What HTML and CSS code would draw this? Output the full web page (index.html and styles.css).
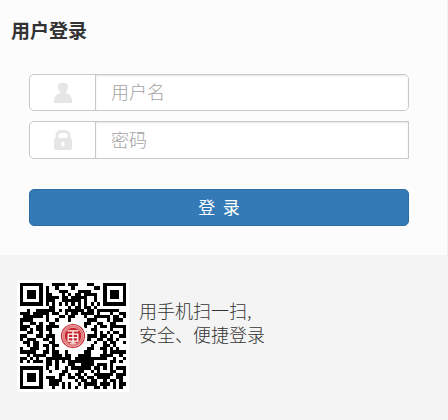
FILE: index.html
```
<!DOCTYPE html>
<html lang="zh-CN">
<head>
<meta charset="utf-8">
<meta name="viewport" content="width=device-width, initial-scale=1">
<title>用户登录</title>
<link rel="stylesheet" href="styles.css">
</head>
<body>
<main class="login">
  <h1 class="title">用户登录</h1>
  <form class="form">
    <div class="group">
      <label class="addon" for="user" aria-label="用户名">
        <svg width="18" height="20" viewBox="0 0 18 20"><path fill="#e6e6e6" d="M7 0h4c2 0 3 1.500 3 3.500C14 6 13 8 12 9v1c3.500 1 6 4 6 7.500V20H0v-2.500C0 14 2.500 11 6 10V9C5 8 4 6 4 3.500 4 1.500 5 0 7 0z"/></svg>
      </label>
      <input class="field" id="user" type="text" placeholder="用户名">
    </div>
    <div class="group group-square">
      <label class="addon" for="pass" aria-label="密码">
        <svg width="18" height="20" viewBox="0 0 18 20"><path fill="none" stroke="#e6e6e6" stroke-width="3" d="M3 9V5.500a4 4 0 0 1 4-4h4a4 4 0 0 1 4 4V9"/><path fill="#e6e6e6" fill-rule="evenodd" d="M2 8h14a2 2 0 0 1 2 2v8a2 2 0 0 1-2 2H2a2 2 0 0 1-2-2v-8a2 2 0 0 1 2-2zm7 3.500a1.500 1.500 0 0 0-1.500 1.500v3.500h3V13A1.500 1.500 0 0 0 9 11.500z"/></svg>
      </label>
      <input class="field" id="pass" type="password" placeholder="密码">
    </div>
    <button class="submit" type="button">登&nbsp;&nbsp;录</button>
  </form>
</main>
<section class="scan">
  <svg class="qr" viewBox="-1 -1 35 35" role="img" aria-label="二维码">
    <path class="paper" d="M-1-1h35v35h-35z"/>
    <path class="modules" id="modules" shape-rendering="crispEdges"/>
    <circle class="paper" cx="16.500" cy="16.500" r="4.500"/>
    <g class="seal">
      <circle cx="16.500" cy="16.500" r="3.600" stroke-width=".35"/>
      <circle cx="16.500" cy="16.500" r="3" stroke-width=".7" stroke-opacity=".6"/>
      <circle class="disc" cx="16.500" cy="16.500" r="2.600"/>
      <path class="mark" d="M14.800 14.900h3.400M15 15.900h3v2.200h-3zM16.500 14.900v3.800M15 17h3M15.600 18.700h1.800"/>
    </g>
  </svg>
  <p class="hint">用手机扫一扫,<br>安全、便捷登录</p>
</section>
<script src="qr.js"></script>
</body>
</html>
```
FILE: styles.css
```
* { box-sizing: border-box; }
body {
  margin: 0;
  min-height: 100vh;
  background: #f4f4f4;
  color: #333;
  font-family: "Noto Sans CJK SC", sans-serif;
}
.login {
  padding: 16px 38px 29px 29px;
  background: #fcfcfc;
  border-right: 1px solid #f0f0f0;
}
.title {
  margin: 0 0 30px -18px;
  font-size: 19px;
  line-height: 28px;
  font-weight: 700;
}
.form { display: flex; flex-direction: column; gap: 10px; }
.group {
  display: flex;
  height: 37px;
  background: #fff;
  border: 1px solid #c8c8c8;
  border-radius: 5px;
  overflow: hidden;
}
.group-square { height: 38px; border-radius: 5px 0 0 5px; }
.addon {
  flex: 0 0 66px;
  display: flex;
  align-items: center;
  justify-content: center;
  border-right: 1px solid #c8c8c8;
}
.field {
  flex: 1;
  min-width: 0;
  border: 0;
  padding: 0 15px 3px;
  background: #fff;
  box-shadow: inset 0 1px 2px rgba(0, 0, 0, .1);
  font-family: inherit;
  font-size: 18px;
  font-weight: 300;
  color: #333;
  outline: 0;
}
.field::placeholder { color: #a3a3a3; opacity: 1; }
.submit {
  height: 37px;
  margin-top: 20px;
  padding: 0 0 2px;
  border: 1px solid #2e6da4;
  border-radius: 5px;
  background: #337ab7;
  color: #fff;
  font-family: inherit;
  font-size: 17px;
  line-height: 24px;
}
.scan {
  display: flex;
  gap: 10px;
  padding: 25px 17px;
}
.qr { width: 112px; height: 112px; flex: none; }
.paper { fill: #fff; }
.modules { fill: #000; }
.seal { fill: none; stroke: #c9252c; }
.disc { fill: #c9252c; stroke: none; }
.mark { stroke: #fff; stroke-width: .4; }
.hint {
  margin: 18px 0 0;
  font-size: 18px;
  line-height: 24px;
  font-weight: 300;
}
```
FILE: qr.js
```
// One string per QR row, # marks a dark module.
const rows = [
  "#######...####.###...##...#######",
  "#.....#.#..#....#......##.#.....#",
  "#.###.#.#...###...####....#.###.#",
  "#.###.#.##...#.#.##.####..#.###.#",
  "#.###.#.####.##.#####..#..#.###.#",
  "#.....#.###..######.#..#..#.....#",
  "#######.#.#.#.#.#.#.#.#.#.#######",
  ".........##....#.##.##.#.........",
  "..#..######.#.######.##.#######..",
  "###.#####.##..#.##.####.#...#..##",
  ".######.#...##.##...#..#####.##.#",
  "####....#..#...#.....###...#.###.",
  "#..##.#..##.........##..##..##...",
  "###..##.####........#..#.##.#####",
  "##.#.##.##............##....#...#",
  "..##..#..#..........#..#.#.#.##.#",
  "##...##.###.........####.##.#..##",
  "#.###..##.#..........#..##.##.#..",
  ".##.##...##........#...#..#.##..#",
  "..#.##.##.##..........#...##.#...",
  "#..###..#.#..........##..##.#.#..",
  "#####..##.##..#.....##....#.#####",
  "..#.####..###.##..####...####..#.",
  "##.#.#..########.##########..#..#",
  "#.#.###.##.#.#.########.....##.#.",
  "........##.#...##..####.###.#....",
  "#######.#..#..#.######.##.#.#.###",
  "#.....#..#...##...##..#.#...##..#",
  "#.###.#.....##.#.##.#..######.###",
  "#.###.#.###.#..##.##.##.####..##.",
  "#.###.#..####....#.##.##..#.##.#.",
  "#.....#..###.#.#..#.####.###.#.##",
  "#######...#..#.#.#..#..##.#..#.#."
];
let d = "";
rows.forEach((row, y) => {
  [...row].forEach((cell, x) => {
    if (cell === "#") d += `M${x} ${y}h1v1h-1z`;
  });
});
document.getElementById("modules").setAttribute("d", d);
```
